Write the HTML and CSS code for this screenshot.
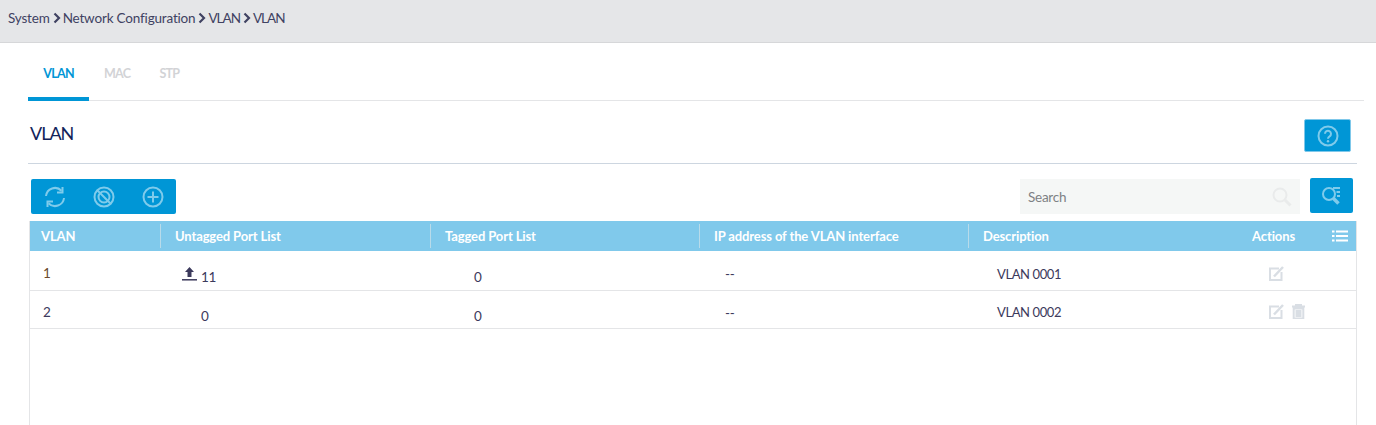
FILE: index.html
```html
<!DOCTYPE html>
<html lang="en">
<head>
<meta charset="utf-8">
<title>VLAN</title>
<link rel="stylesheet" href="styles.css">
</head>
<body>
<nav class="crumbs">
  <span>System</span><svg class="chev" viewBox="0 0 8 12"><path d="M1.5 1.5 6 6l-4.500 4.500" /></svg>
  <span>Network Configuration</span><svg class="chev" viewBox="0 0 8 12"><path d="M1.5 1.5 6 6l-4.500 4.500" /></svg>
  <span class="caps">VLAN</span><svg class="chev" viewBox="0 0 8 12"><path d="M1.5 1.5 6 6l-4.500 4.500" /></svg>
  <span class="caps">VLAN</span>
</nav>
<main class="page">
  <div class="tabs">
    <a class="tab active">VLAN</a>
    <a class="tab">MAC</a>
    <a class="tab">STP</a>
  </div>
  <div class="title-row">
    <h1>VLAN</h1>
    <button class="help" aria-label="Help">
      <svg viewBox="0 0 22 22" width="22" height="22"><circle cx="11" cy="11" r="9.500" class="ic"/><path d="M8 8.800a3 3 0 1 1 4.600 2.500c-1.100.7-1.600 1.200-1.600 2.400" class="ic"/><circle cx="11" cy="16.200" r="1.200" class="icf"/></svg>
    </button>
  </div>
  <div class="toolbar">
    <div class="tools">
      <svg viewBox="0 0 22 22" width="22" height="22"><path d="M2 10A9 9 0 0 1 17.500 4.800M20 12A9 9 0 0 1 4.500 17.200" class="ic"/><path d="M18.500 1v5.500H13M3.500 21v-5.500H9" class="ic"/></svg>
      <svg viewBox="0 0 22 22" width="22" height="22"><circle cx="11" cy="11" r="9.500" class="ic"/><circle cx="11" cy="11" r="5.500" class="ic"/><path d="M4.300 4.300l13.400 13.400" class="ic"/></svg>
      <svg viewBox="0 0 22 22" width="22" height="22"><circle cx="11" cy="11" r="9.500" class="ic"/><path d="M11 5.500v11M5.500 11h11" class="ic"/></svg>
    </div>
    <div class="search-wrap">
      <div class="search">
        <span>Search</span>
        <svg viewBox="0 0 20 20" width="20" height="20"><circle cx="8" cy="8" r="6.500" fill="none" stroke="#e9ebeb" stroke-width="2"/><path d="M13 13l5.500 5.500" stroke="#e9ebeb" stroke-width="3" fill="none"/></svg>
      </div>
      <button class="adv" aria-label="Advanced search">
        <svg viewBox="0 0 22 20" width="22" height="20"><circle cx="8" cy="8" r="6" class="ic"/><path d="M12.500 12.500l5 5" class="ic thick"/><path d="M12 2h7M15.500 6H19M16 10h3" class="ic"/></svg>
      </button>
    </div>
  </div>
  <div class="table">
    <div class="row head">
      <div class="th">VLAN</div>
      <div class="th sep">Untagged Port List</div>
      <div class="th sep">Tagged Port List</div>
      <div class="th sep">IP address of the VLAN interface</div>
      <div class="th sep last">
        <span>Description</span>
        <span class="actions-h">Actions
          <svg viewBox="0 0 16 12" width="16" height="12"><path d="M0 1.500h2.500M4 1.500h12M0 6h2.500M4 6h12M0 10.500h2.500M4 10.500h12" stroke="#fff" stroke-width="2.200" fill="none"/></svg>
        </span>
      </div>
    </div>
    <div class="row body first">
      <div class="td c-id brown">1</div>
      <div class="td c-un"><svg class="up" viewBox="0 0 15 14" width="15" height="14"><path d="M7.500 0 12 5H9.500v5h-4V5H3z" fill="#3c3a5c"/><path d="M0 12.800h15" stroke="#3c3a5c" stroke-width="1.500"/></svg><span class="low">11</span></div>
      <div class="td c-t"><span class="low">0</span></div>
      <div class="td c-ip">--</div>
      <div class="td c-d"><span>VLAN 0001</span>
        <span class="acts">
          <svg viewBox="0 0 15 15" width="15" height="15"><path d="M10 2.500H1v11.500h11.500V6" class="g"/><path d="M5 10.500 14 1" class="g thick2"/></svg>
        </span>
      </div>
    </div>
    <div class="row body">
      <div class="td c-id">2</div>
      <div class="td c-un zero"><span class="low">0</span></div>
      <div class="td c-t"><span class="low">0</span></div>
      <div class="td c-ip">--</div>
      <div class="td c-d second"><span>VLAN 0002</span>
        <span class="acts">
          <svg viewBox="0 0 15 15" width="15" height="15"><path d="M10 2.500H1v11.500h11.500V6" class="g"/><path d="M5 10.500 14 1" class="g thick2"/></svg>
          <svg viewBox="0 0 13 15" width="13" height="15"><path d="M0 2.500h13M4 2.500V.7h5v1.800M1.700 4.500h9.600V14.500H1.700zM4.500 6v7M6.500 6v7M8.500 6v7" class="g"/></svg>
        </span>
      </div>
    </div>
  </div>
</main>
</body>
</html>
```
FILE: styles.css
```css
* { box-sizing: border-box; }
html, body { margin: 0; height: 425px; overflow: hidden; background: #fff; }
body { font-family: Lato, "Open Sans", sans-serif; font-size: 13.500px; letter-spacing: -0.25px; color: #3c3a5c; }
svg { display: block; flex: none; }

.crumbs { height: 43px; background: #e5e6e8; border-bottom: 1px solid #d6d7d9; padding: 0 0 7px 8px; display: flex; align-items: center; color: #404262; letter-spacing: -0.18px; }
.caps { letter-spacing: -1px; }
.chev { width: 8px; height: 12px; margin: 0 2px 0 3px; }
.chev path { fill: none; stroke: #404262; stroke-width: 2.200; }

.page { padding: 0 12px 0 28px; height: 382px; display: flex; flex-direction: column; }

.tabs { display: flex; height: 58px; border-bottom: 1px solid #e4e5e7; }
.tab { width: 61px; padding-top: 23px; text-align: center; font-size: 12.500px; letter-spacing: -0.7px; font-weight: 700; color: #d2d3d6; border-bottom: 4px solid transparent; margin-bottom: -1px; }
.tab.active { color: #0096d6; border-bottom-color: #0096d6; }
.tab + .tab { width: auto; margin-left: 15px; }
.tab + .tab + .tab { margin-left: 29px; }

.title-row { margin-right: 7px; height: 63px; border-bottom: 1px solid #cdd6e0; display: flex; justify-content: space-between; padding-top: 18px; }
h1 { margin: 2px 0 0 2px; font-size: 18px; letter-spacing: -1px; font-weight: 400; line-height: 24px; color: #12235a; }
.help { width: 47px; height: 33px; margin-right: 6px; border: 1px solid #7fc8ea; border-radius: 2px; background: #0096d6; padding: 0; display: flex; align-items: center; justify-content: center; }

.ic { fill: none; stroke: #7fcbeb; stroke-width: 2; }
.ic.thick { stroke-width: 3.500; }
.icf { fill: #7fcbeb; }

.toolbar { display: flex; justify-content: space-between; align-items: flex-start; margin-top: 14px; height: 43px; margin-right: -1px; padding-right: 11px; width: 1336px; }
.tools { margin: 1px 0 0 3px; width: 145px; height: 35px; background: #0096d6; border-radius: 2px; display: flex; align-items: center; padding-left: 13px; gap: 27px; }
.search-wrap { display: flex; gap: 10px; }
.search { margin-top: 1px; width: 280px; height: 35px; background: #f5f7f6; display: flex; justify-content: space-between; align-items: center; padding: 0 8px; color: #7e8184; }
.adv { width: 43px; height: 35px; border: 0; border-radius: 2px; background: #0096d6; padding: 0; display: flex; align-items: center; justify-content: center; }

.table { margin-left: 1px; margin-right: 7px; flex: 1; border-left: 1px solid #e4e5e7; border-right: 1px solid #e4e5e7; }
.row { display: grid; grid-template-columns: 130px 270px 269px 269px 1fr; }
.head { height: 30px; background: #80c9eb; align-items: center; color: #fff; font-weight: 700; font-size: 13px; letter-spacing: -0.12px; }
.th { height: 24px; line-height: 24px; padding-left: 11px; }
.th.sep { border-left: 1px solid #b8dbea; padding-left: 14px; }
.th.last { display: flex; justify-content: space-between; padding-right: 8px; }
.actions-h { display: flex; align-items: center; gap: 37px; }

.body { border-bottom: 1px solid #e4e5e7; height: 38px; align-items: center; color: #3c3a5c; }
.body.first { height: 40px; }
.td { display: flex; align-items: center; }
.c-id { padding: 5px 0 0 13px; }
.brown { color: #6b4a2e; }
.c-un { padding-left: 22px; gap: 4px; }
.zero { padding-left: 41px; }
.c-t { padding-left: 44px; }
.c-ip { padding: 6px 0 0 26px; }
.c-d { padding: 6px 0 0 29px; justify-content: space-between; font-size: 13px; letter-spacing: -0.4px; }
.c-d.second { padding-top: 4px; }
.low { padding-top: 13px; }
.up { margin-top: 7px; }
.acts { display: flex; gap: 8px; width: 87px; }
.g { fill: none; stroke: #d9dee4; stroke-width: 2; }
.g.thick2 { stroke-width: 2.500; }
```
